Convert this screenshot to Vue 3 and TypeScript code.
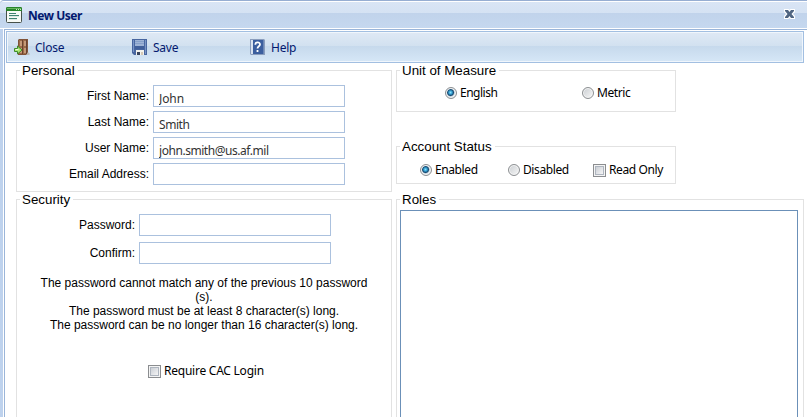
<script setup lang="ts">
import { reactive, ref } from 'vue'

interface Field {
  key: 'first' | 'last' | 'user' | 'email'
  label: string
}

const fields: Field[] = [
  { key: 'first', label: 'First Name:' },
  { key: 'last', label: 'Last Name:' },
  { key: 'user', label: 'User Name:' },
  { key: 'email', label: 'Email Address:' },
]
const user = reactive({ first: 'John', last: 'Smith', user: 'john.smith@us.af.mil', email: '' })
const password = ref('')
const confirmation = ref('')
const unit = ref('english')
const status = ref('enabled')
const readOnly = ref(false)
const requireCac = ref(false)
</script>

<template>
  <div class="window">
    <header class="title-bar">
      <svg class="title-icon" width="16" height="16" viewBox="0 0 16 16">
        <rect x=".5" y=".5" width="15" height="15" rx="1" fill="#f7faf6" stroke="#46514a" />
        <path d="M1 0h14l1 1v3H0V1z" fill="#27842b" />
        <path d="M1 1h14v1H1z" fill="#69b65f" />
        <path d="M10 2h1v1h-1zM12 2h1v1h-1zM14 2h1v1h-1z" fill="#c7edbd" />
        <path d="M3 6.500h7M3 8.500h10M3 11.500h8" stroke="#3f8371" />
        <path d="M3 9.500h10M3 12.500h8" stroke="#dce9e3" />
      </svg>
      <h1>New User</h1>
      <button class="dismiss" aria-label="Close window">
        <svg width="13" height="12" viewBox="0 0 13 12">
          <path d="M1 1h4.500l1 1 1-1H12v3l-2 2 2 2v3H7.500l-1-1-1 1H1V8l2-2-2-2z" fill="#fff" />
          <path d="M2 2h3l1.500 2L8 2h3v1L8.500 6 11 9v1H8L6.500 8 5 10H2V9l2.500-3L2 3z" fill="#506581" />
        </svg>
      </button>
    </header>

    <div class="body">
      <nav class="toolbar">
        <button class="tool tool-close">
          <svg width="16" height="16" viewBox="0 0 16 16">
            <path d="M4 1l1-1h9v15l-1 1H4z" fill="#805338" />
            <path d="M14 13l2 2-1 1h-3z" fill="#b9b9b5" />
            <path d="M5 1h8v14H5z" fill="#9b6a48" />
            <path d="M6 2h2v5H6zM10 2h2v5h-2zM6 9h2v5H6zM10 9h2v5h-2z" fill="#c59a78" />
            <path d="M8.500 1v14M12.500 1v14" stroke="#6a432f" />
            <path d="M.500 9.500h3v-2.500L8 11 3.500 15v-2.500h-3z" fill="#a9e873" stroke="#3f8b2b" />
            <path d="M1.500 10.500h3" stroke="#edffd7" />
          </svg>
          <span class="t-close">Close</span>
        </button>
        <button class="tool tool-save">
          <svg width="16" height="16" viewBox="0 0 16 16">
            <path d="M0 0h15v16H2l-2-2z" fill="#4866a0" />
            <path d="M1 1h1v12H1zM13 1h1v14h-1z" fill="#7894c5" />
            <path d="M3 1h9v6H3z" fill="#9eb3d5" />
            <path d="M3 2.500h9M3 4.500h9" stroke="#86a0ca" />
            <path d="M3 7h9v3H3z" fill="#405f9a" />
            <path d="M4 11h8v5H4z" fill="#f2f2ed" />
            <path d="M5 13h3v3H5z" fill="#39445d" />
            <path d="M9 13h2v3H9z" fill="#d4c9b6" />
          </svg>
          <span class="t-save">Save</span>
        </button>
        <button class="tool tool-help">
          <svg width="15" height="16" viewBox="0 0 15 16">
            <path d="M0 0h14l1 1v15H1l-1-1z" fill="#8a9dbd" />
            <path d="M1 1h2v14H1z" fill="#d9e3f0" />
            <path d="M3 1h11v14H3z" fill="#3c5f9f" />
            <path d="M13.500 1v14" stroke="#6c87b6" />
            <path d="M5.300 5.700C5.300 2.800 10 2.700 10 5.400c0 2-2.500 1.800-2.500 4.100M7.500 11v2" fill="none" stroke="#fff" stroke-width="1.800" />
          </svg>
          <span class="t-help">Help</span>
        </button>
      </nav>

      <main class="columns">
        <div class="column">
          <section class="group personal">
            <h2>Personal</h2>
            <label v-for="field in fields" :key="field.key" class="row">
              <span>{{ field.label }}</span>
              <input v-model="user[field.key]" type="text" :class="'in-' + field.key" />
            </label>
          </section>
          <section class="group security">
            <h2>Security</h2>
            <label class="row"><span>Password:</span><input v-model="password" type="password" /></label>
            <label class="row"><span>Confirm:</span><input v-model="confirmation" type="password" /></label>
            <p class="rules">
              The password cannot match any of the previous 10 password<br />(s).<br />
              The password must be at least 8 character(s) long.<br />
              The password can be no longer than 16 character(s) long.
            </p>
            <label class="choice cac"><input v-model="requireCac" type="checkbox" /><span class="t-cac">Require CAC Login</span></label>
          </section>
        </div>

        <div class="column">
          <section class="group unit">
            <h2>Unit of Measure</h2>
            <label class="choice"><input v-model="unit" type="radio" name="unit" value="english" /><span class="t-english">English</span></label>
            <label class="choice"><input v-model="unit" type="radio" name="unit" value="metric" /><span class="t-metric">Metric</span></label>
          </section>
          <section class="group status">
            <h2>Account Status</h2>
            <label class="choice"><input v-model="status" type="radio" name="status" value="enabled" /><span class="t-enabled">Enabled</span></label>
            <label class="choice"><input v-model="status" type="radio" name="status" value="disabled" /><span class="t-disabled">Disabled</span></label>
            <label class="choice"><input v-model="readOnly" type="checkbox" /><span class="t-read">Read Only</span></label>
          </section>
          <section class="group roles">
            <h2>Roles</h2>
            <div class="list" role="listbox" aria-label="Roles"></div>
          </section>
        </div>
      </main>
    </div>
  </div>
</template>

<style>
html, body { margin: 0; overflow: hidden; }
</style>

<style scoped>
* { box-sizing: border-box; }
button { padding: 0; border: 0; background: none; }
svg { display: block; flex: none; }
.window {
  width: 807px;
  height: 417px;
  overflow: hidden;
  display: flex;
  flex-direction: column;
  background: #fff;
  color: #000;
  font-family: "Liberation Sans", Arial, sans-serif;
  font-size: 12px;
}
.title-bar {
  height: 29px;
  flex: none;
  display: flex;
  align-items: flex-start;
  padding: 6px 11px 0 6px;
  border-top: 1px solid #97aed2;
  border-bottom: 1px solid #fff;
  border-top-left-radius: 4px;
  background: linear-gradient(#fff 1px, #d9e5f5 1px, #d5e2f3 12px, #c1d3eb 12px, #c5d8ef 27px);
}
.title-bar h1 {
  margin: 0 auto 0 6px;
  font: bold 12px/18px "Noto Sans", sans-serif;
  letter-spacing: -0.48px;
  color: #03196f;
}
.dismiss { margin-top: 1px; }
.body {
  flex: 1;
  min-height: 0;
  display: flex;
  flex-direction: column;
  padding: 1px 3px 0 1px;
  border-top: 1px solid #9ab5d9;
  border-left: 5px solid #9ab5d9;
  border-image: linear-gradient(90deg, #bed2ed 3px, #fff 3px, #fff 4px, #9ab5d9 4px) 1 0 0 5;
}
.toolbar {
  position: relative;
  z-index: 1;
  height: 32px;
  flex: none;
  display: flex;
  align-items: flex-start;
  padding: 7px 0 0 7px;
  border: 1px solid #a2bfe1;
  box-shadow: inset 0 0 0 1px #f0f6fc;
  background: linear-gradient(#dfe9f5, #d2e1f0 14px, #c6d9ec 14px, #d6e7f7 30px);
}
.tool {
  display: flex;
  gap: 5px;
  font: 12px/17px "Noto Sans", sans-serif;
  letter-spacing: -0.25px;
  color: #03196f;
}
.tool-close { width: 118px; }
.tool-save { width: 118px; }
.tool-help { gap: 6px; }
.columns {
  flex: 1;
  min-height: 0;
  display: grid;
  grid-template-columns: 376px 408px;
  gap: 4px;
  padding: 7px 0 0 10px;
}
.column { display: flex; flex-direction: column; min-height: 0; }
.group { position: relative; border: 1px solid #e2e2e2; }
.group h2 {
  position: absolute;
  top: -8px;
  left: 3px;
  margin: 0;
  padding: 0 3px 0 2px;
  background: #fff;
  font-size: 13.333px;
  font-weight: normal;
  line-height: 15px;
  white-space: nowrap;
}
.row { display: flex; align-items: flex-start; }
.row span { text-align: right; line-height: 14px; padding-top: 4px; }
.row input {
  width: 192px;
  height: 22px;
  margin: 0 0 0 4px;
  padding: 4px 5px 0;
  border: 1px solid #abc1de;
  border-radius: 0;
  outline: 0;
  background: #fff;
  font: 12px/16px "Noto Sans", sans-serif;
  color: #333;
}
.row .in-first { letter-spacing: -0.1px; }
.row .in-last { letter-spacing: -0.45px; }
.row .in-user { letter-spacing: -0.45px; }
.personal { height: 122px; display: flex; flex-direction: column; gap: 4px; padding-top: 14px; }
.personal .row span { width: 132px; }
.security { flex: 1; margin-top: 7px; border-bottom: 0; padding-top: 14px; }
.security .row { margin-bottom: 6px; }
.security .row span { width: 118px; }
.rules { margin: 12px 0 0; text-align: center; line-height: 14px; }
.choice { display: flex; align-items: center; white-space: nowrap; font: 12px/16px "Noto Sans", sans-serif; letter-spacing: -0.4px; }
.choice input { appearance: none; flex: none; margin: 0 3px 0 0; }
.choice input[type="radio"] {
  width: 12px;
  height: 12px;
  border: 1px solid #8c8f92;
  border-radius: 50%;
  box-shadow: inset 0 0 0 1px #f5f5f5;
  background: linear-gradient(135deg, #c9cdd1, #f8f8f8);
}
.choice input[type="radio"]:checked {
  background: radial-gradient(circle at 4.500px 4.500px, #8ee0fb 0, #39a7d8 1.5px, #164b74 3px, #dce4e9 4.2px);
}
.choice input[type="checkbox"] {
  width: 13px;
  height: 13px;
  border: 1px solid #8b8d90;
  background: linear-gradient(135deg, #cbcfd5, #f5f5f6) content-box, #aeb5bf padding-box;
  padding: 2px;
  box-shadow: inset 0 0 0 1px #f4f4f4;
}
.cac { margin: 31px 0 0 131px; }
.choice .t-cac { letter-spacing: -0.24px; }
.choice .t-english { letter-spacing: -0.5px; }
.unit { width: 280px; height: 42px; display: flex; padding: 14px 0 0 48px; }
.unit .choice, .status .choice { height: 16px; }
.unit .choice:nth-of-type(1) { width: 137px; }
.status { width: 280px; height: 38px; margin-top: 34px; display: flex; padding: 15px 0 0 23px; }
.status .choice:nth-of-type(1) { width: 88px; }
.status .choice:nth-of-type(2) { width: 85px; }
.roles { flex: 1; min-height: 0; margin-top: 15px; border-bottom: 0; padding: 10px 5px 0 3px; }
.list { height: 100%; border: 1px solid #6b90b8; border-bottom: 0; }
</style>
